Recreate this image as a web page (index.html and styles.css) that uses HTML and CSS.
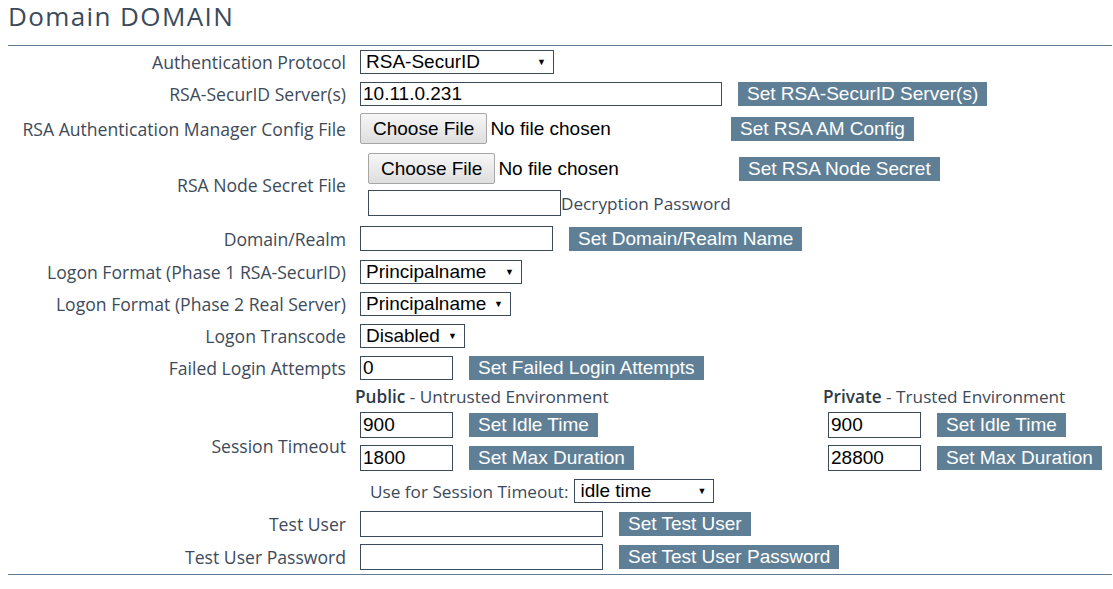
FILE: index.html
```html
<!DOCTYPE html>
<html>
<head>
<meta charset="utf-8">
<title>Domain DOMAIN</title>
<link rel="stylesheet" href="styles.css">
</head>
<body>
<h1 class="title">Domain DOMAIN</h1>
<div class="form">
  <div class="row r1">
    <div class="label">Authentication Protocol</div>
    <div class="ctrl">
      <div class="sel w194"><span class="sel-text">RSA-SecurID</span><span class="arrow">▼</span></div>
    </div>
  </div>
  <div class="row r2">
    <div class="label">RSA-SecurID Server(s)</div>
    <div class="ctrl">
      <input class="txt w362 h24" type="text" value="10.11.0.231">
      <span class="btn">Set RSA-SecurID Server(s)</span>
    </div>
  </div>
  <div class="row r3">
    <div class="label">RSA Authentication Manager Config File</div>
    <div class="ctrl">
      <div class="file"><span class="file-btn">Choose File</span><span class="file-name">No file chosen</span></div>
      <span class="btn">Set RSA AM Config</span>
    </div>
  </div>
  <div class="row r4">
    <div class="label">RSA Node Secret File</div>
    <div class="ctrl stack indent">
      <div class="line">
        <div class="file"><span class="file-btn">Choose File</span><span class="file-name">No file chosen</span></div>
        <span class="btn">Set RSA Node Secret</span>
      </div>
      <div class="line pw">
        <input class="txt w193" type="password" value="">
        <span class="inline-label">Decryption Password</span>
      </div>
    </div>
  </div>
  <div class="row r5">
    <div class="label">Domain/Realm</div>
    <div class="ctrl">
      <input class="txt w193 h25" type="text" value="">
      <span class="btn">Set Domain/Realm Name</span>
    </div>
  </div>
  <div class="row">
    <div class="label">Logon Format (Phase 1 RSA-SecurID)</div>
    <div class="ctrl">
      <div class="sel w162"><span class="sel-text">Principalname</span><span class="arrow">▼</span></div>
    </div>
  </div>
  <div class="row">
    <div class="label">Logon Format (Phase 2 Real Server)</div>
    <div class="ctrl">
      <div class="sel w151"><span class="sel-text">Principalname</span><span class="arrow">▼</span></div>
    </div>
  </div>
  <div class="row">
    <div class="label">Logon Transcode</div>
    <div class="ctrl">
      <div class="sel w105"><span class="sel-text">Disabled</span><span class="arrow">▼</span></div>
    </div>
  </div>
  <div class="row">
    <div class="label">Failed Login Attempts</div>
    <div class="ctrl">
      <input class="txt w93 h24" type="text" value="0">
      <span class="btn">Set Failed Login Attempts</span>
    </div>
  </div>
  <div class="row session">
    <div class="label">Session Timeout</div>
    <div class="ctrl sess-grid">
      <div class="env-head"><b>Public</b> - Untrusted Environment</div>
      <div class="env-head priv"><b>Private</b> - Trusted Environment</div>
      <div class="line"><input class="txt w93" type="text" value="900"><span class="btn">Set Idle Time</span></div>
      <div class="line"><input class="txt w93" type="text" value="900"><span class="btn">Set Idle Time</span></div>
      <div class="line"><input class="txt w93" type="text" value="1800"><span class="btn">Set Max Duration</span></div>
      <div class="line"><input class="txt w93" type="text" value="28800"><span class="btn">Set Max Duration</span></div>
      <div class="line use-for">
        <span class="inline-label">Use for Session Timeout:</span>
        <div class="sel w140"><span class="sel-text">idle time</span><span class="arrow">▼</span></div>
      </div>
    </div>
  </div>
  <div class="row">
    <div class="label">Test User</div>
    <div class="ctrl">
      <input class="txt w243" type="text" value="">
      <span class="btn">Set Test User</span>
    </div>
  </div>
  <div class="row r-last">
    <div class="label">Test User Password</div>
    <div class="ctrl">
      <input class="txt w243" type="password" value="">
      <span class="btn">Set Test User Password</span>
    </div>
  </div>
</div>
</body>
</html>
```

FILE: styles.css
```css
* { box-sizing: border-box; }
body {
  margin: 0 1px 0 8px;
  background: #ffffff;
  font-family: "Open Sans", "Noto Sans", sans-serif;
  color: #3d4a59;
}
.title {
  margin: 0;
  height: 46px;
  padding-top: 0;
  font-size: 26px;
  letter-spacing: 1.4px;
  line-height: 32px;
  font-weight: normal;
  color: #3a4a5c;
  border-bottom: 1px solid #5f7a91;
}
.form {
  border-bottom: 1px solid #5f7a91;
}
.row {
  display: flex;
  align-items: center;
  height: 32px;
}
.r1 { height: 32px; }
.r2 { height: 31px; }
.r3 { height: 39px; }
.r4 { height: 73px; }
.r5 { height: 35px; }
.session { height: 124px; }
.r-last { height: 34px; }
.label {
  width: 338px;
  flex: none;
  text-align: right;
  font-size: 17.6px;
  white-space: nowrap;
}
.ctrl {
  margin-left: 14px;
  display: flex;
  align-items: center;
  gap: 16px;
}
.stack {
  flex-direction: column;
  align-items: flex-start;
  gap: 6px;
}
.indent { padding-left: 8px; }
.line {
  display: flex;
  align-items: center;
  gap: 16px;
}
.pw { gap: 0; }
.inline-label {
  font-size: 17.2px;
  white-space: nowrap;
}
.txt {
  height: 26px;
  border: 1px solid #3b4b5c;
  border-radius: 0;
  padding: 0 2px;
  margin: 0;
  font-family: "Liberation Sans", Arial, sans-serif;
  font-size: 19px;
  color: #000;
  background: #fff;
  outline: none;
}
.h24 { height: 24px; }
.h25 { height: 25px; }
.w93 { width: 93px; }
.w193 { width: 193px; }
.w243 { width: 243px; }
.w362 { width: 362px; }
.btn {
  display: inline-flex;
  align-items: center;
  height: 24px;
  padding: 0 9px;
  background: #5f7f96;
  color: #ffffff;
  font-family: "Liberation Sans", Arial, sans-serif;
  font-size: 19px;
  white-space: nowrap;
}
.sel {
  position: relative;
  display: flex;
  align-items: center;
  height: 24px;
  border: 1px solid #3b4b5c;
  padding-left: 5px;
  font-family: "Liberation Sans", Arial, sans-serif;
  font-size: 19px;
  color: #000;
  background: #fff;
}
.sel-text { white-space: nowrap; }
.arrow {
  position: absolute;
  right: 7px;
  top: 50%;
  transform: translateY(-50%);
  font-size: 9px;
  color: #000;
}
.w105 { width: 105px; }
.w140 { width: 140px; }
.w151 { width: 151px; }
.w162 { width: 162px; }
.w194 { width: 194px; }
.file {
  width: 355px;
  display: flex;
  align-items: center;
  font-family: "Liberation Sans", Arial, sans-serif;
  font-size: 19px;
  color: #000;
}
.file-btn {
  display: inline-flex;
  align-items: center;
  height: 31px;
  padding: 0 12px;
  border: 1px solid #a6a6a6;
  border-radius: 2px;
  background: linear-gradient(#f6f6f6, #dedede);
  color: #000;
  margin-right: 3px;
}
.file-name { white-space: nowrap; }
.sess-grid {
  display: grid;
  grid-template-columns: 468px auto;
  row-gap: 7px;
  column-gap: 0;
  align-items: center;
}
.env-head {
  font-size: 17.2px;
  line-height: 16px;
  margin-left: -5px;
  white-space: nowrap;
}
.env-head b { font-weight: 600; color: #2e3a48; }
.use-for {
  grid-column: 1 / span 2;
  gap: 6px;
  margin-left: 10px;
  margin-top: 1px;
}
```
